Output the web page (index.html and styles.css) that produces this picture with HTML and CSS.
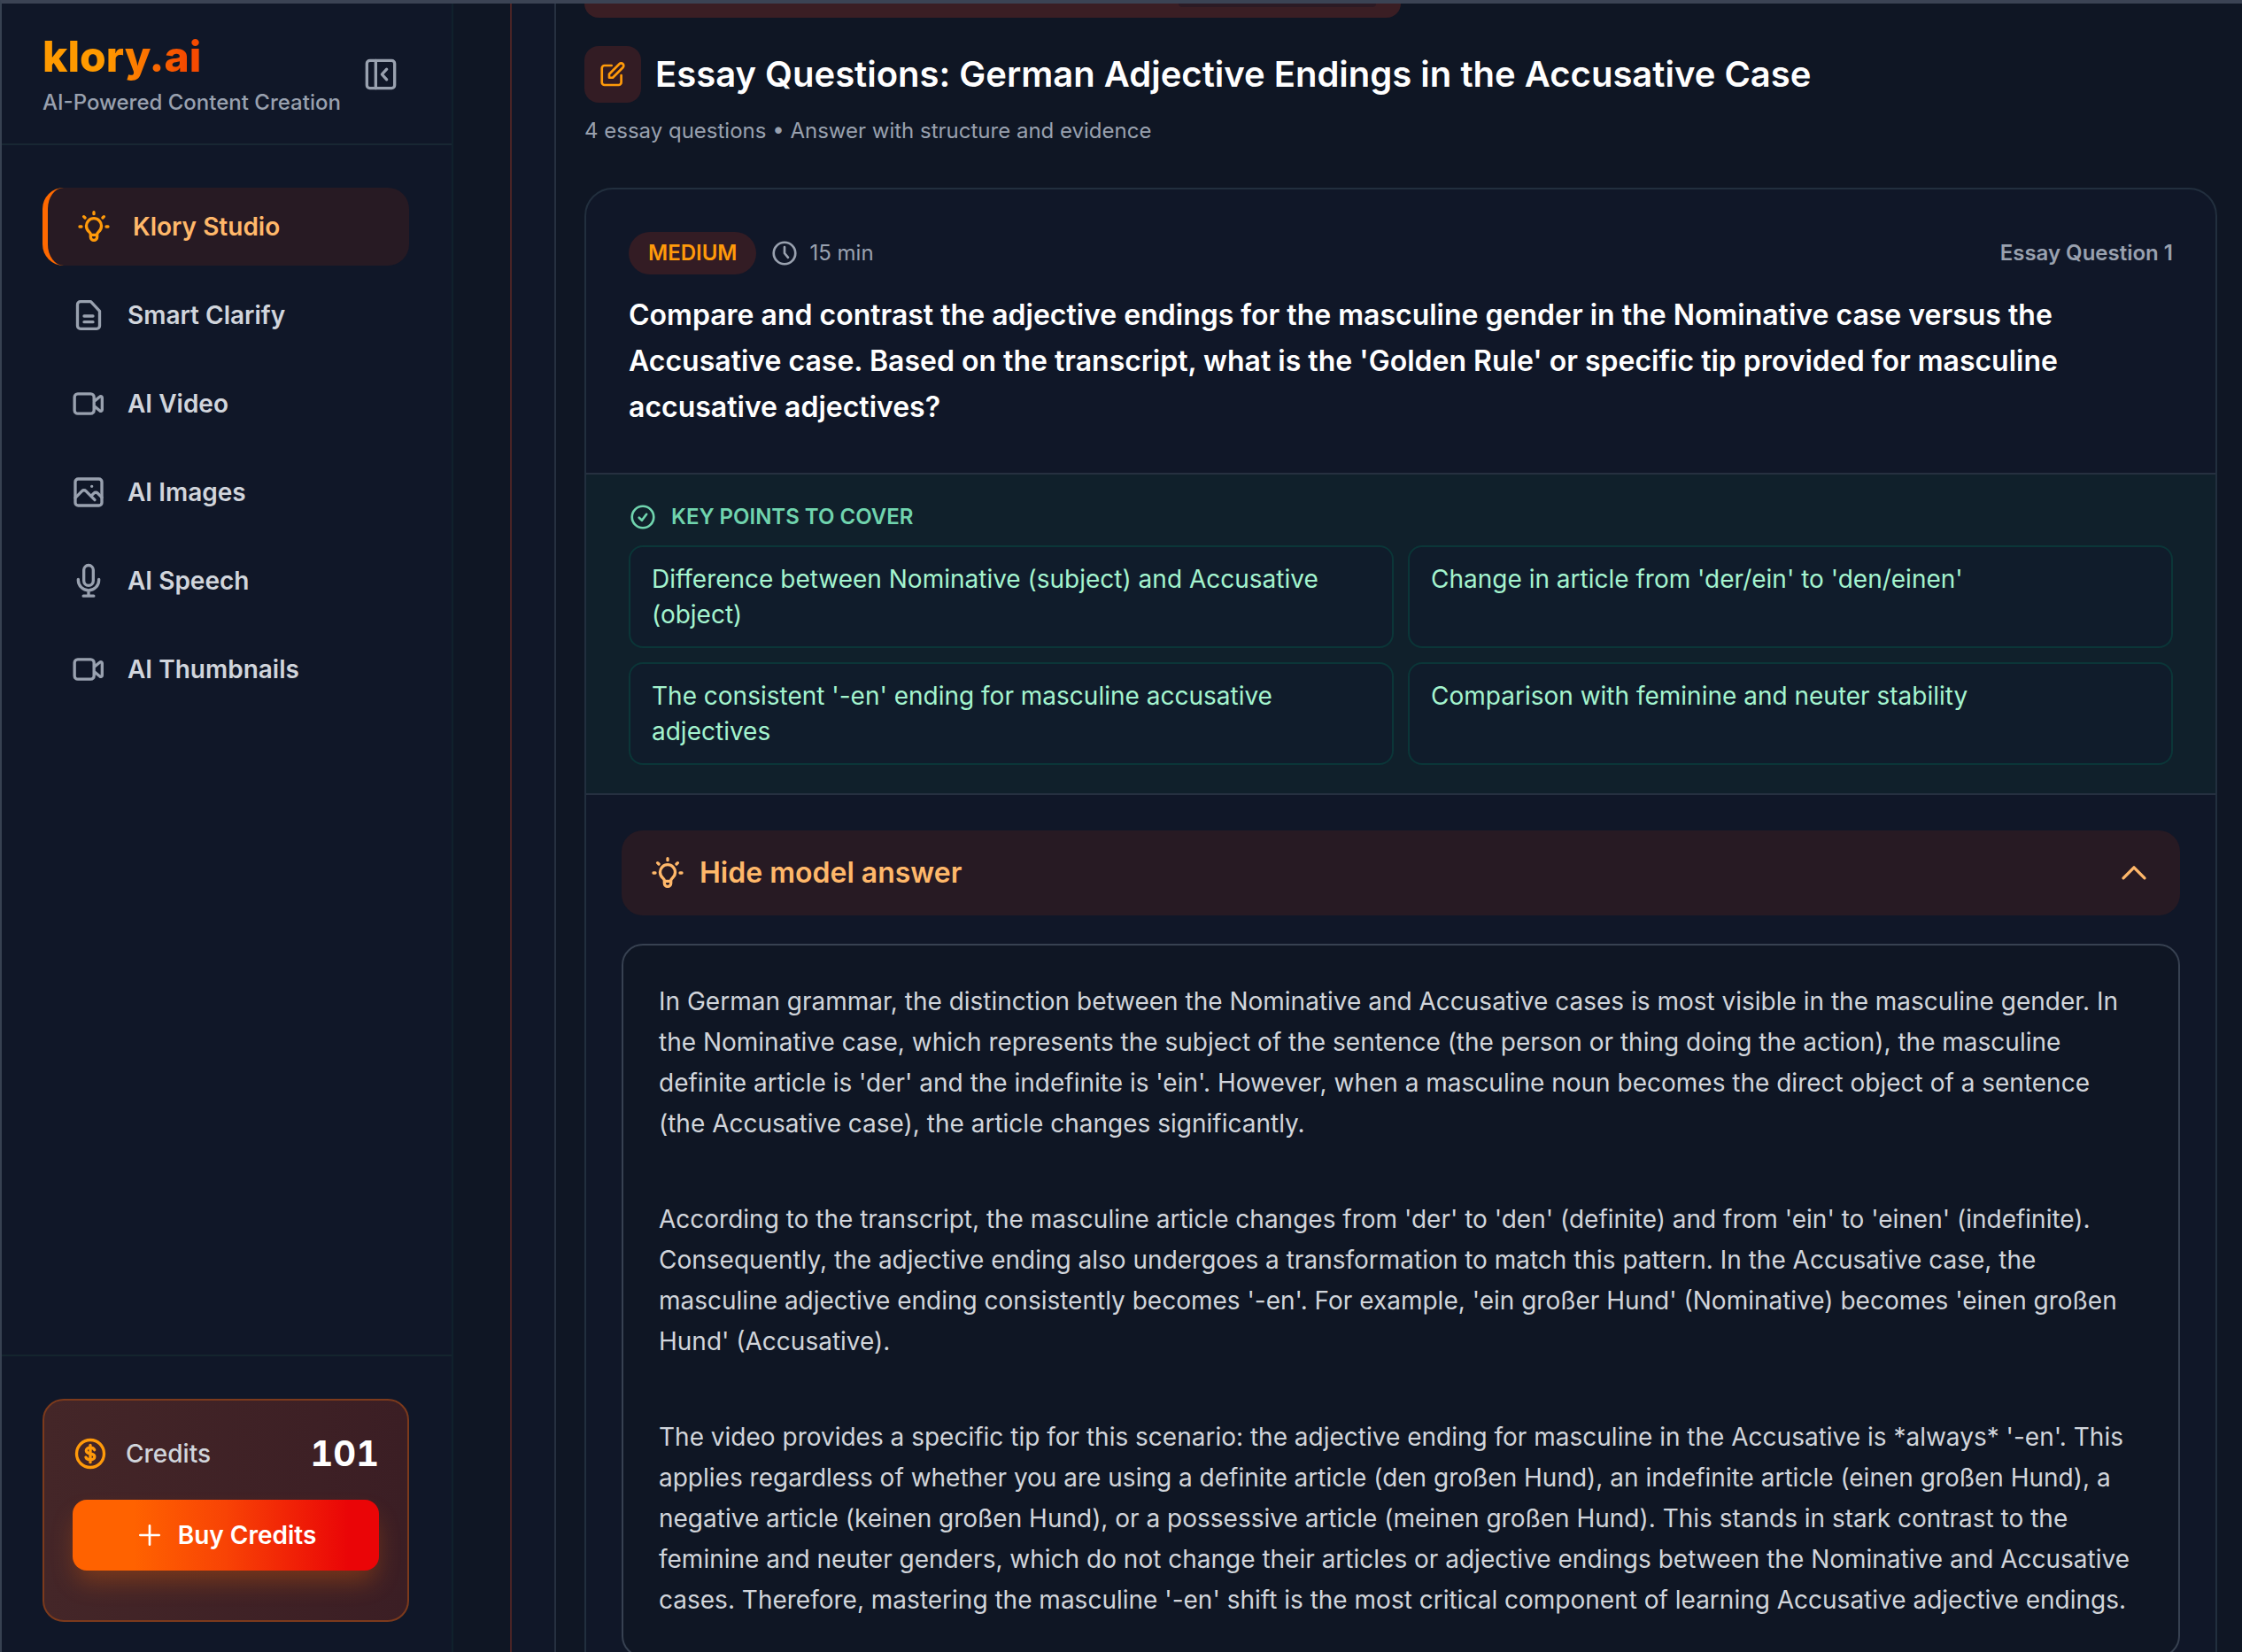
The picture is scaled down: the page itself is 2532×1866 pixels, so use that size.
FILE: index.html
```html
<!DOCTYPE html>
<html lang="en">
  <head>
    <meta charset="UTF-8" />
    <meta name="viewport" content="width=device-width, initial-scale=1.0" />
    <title>klory.ai - Essay Questions</title>
    <link rel="stylesheet" href="styles.css">
  </head>
  <body>
    <!-- shared icons -->
    <svg class="icon-defs" aria-hidden="true">
      <symbol id="icon-bulb" viewBox="0 0 24 24">
        <path d="M12 2.200v1.200M5.200 5.200l.8.8M18.800 5.200 18 6M2.400 12h1.200M20.400 12h1.200M9.800 19v-1.700c0-.8-.5-1.300-1.100-1.900a5.100 5.100 0 1 1 6.600 0c-.6.6-1.100 1.100-1.100 1.900V19a2.200 2.200 0 0 1-4.400 0zM9.800 17.600h4.400" />
      </symbol>
      <symbol id="icon-video" viewBox="0 0 24 24">
        <path d="m15.700 10.500 4-3.300a.9.900 0 0 1 1.500.7v8.200a.9.900 0 0 1-1.500.7l-4-3.300M4.700 18.700h8.800a2.200 2.200 0 0 0 2.200-2.200v-9a2.200 2.200 0 0 0-2.200-2.200H4.700a2.200 2.200 0 0 0-2.200 2.200v9a2.200 2.200 0 0 0 2.200 2.200z" />
      </symbol>
    </svg>

    <div class="app">
      <aside class="sidebar">
        <div class="sidebar-header">
          <div>
            <div class="logo">klory.ai</div>
            <p class="tagline">AI-Powered Content Creation</p>
          </div>
          <button type="button" class="collapse-btn" aria-label="Collapse sidebar">
            <svg class="icon" viewBox="0 0 24 24">
              <rect x="2.600" y="2.600" width="18.800" height="18.800" rx="2" />
              <path d="M8.600 2.600v18.800M16 8.500 12.800 12l3.200 3.500" />
            </svg>
          </button>
        </div>

        <nav class="nav">
          <a href="#" class="nav-item active">
            <svg class="icon"><use href="#icon-bulb" /></svg>
            Klory Studio
          </a>
          <a href="#" class="nav-item">
            <svg class="icon" viewBox="0 0 24 24">
              <path d="M13.500 2.800h-7a2 2 0 0 0-2 2v14.400a2 2 0 0 0 2 2h11a2 2 0 0 0 2-2V9.200zM9 12.600h6M9 16.600h6" />
            </svg>
            Smart Clarify
          </a>
          <a href="#" class="nav-item">
            <svg class="icon"><use href="#icon-video" /></svg>
            AI Video
          </a>
          <a href="#" class="nav-item">
            <svg class="icon" viewBox="0 0 24 24">
              <rect x="3" y="3" width="18" height="18" rx="2" />
              <path d="m3 15.800 4.600-4.600a1.800 1.800 0 0 1 2.600 0l6 6M14 14.300l1.600-1.600a1.800 1.800 0 0 1 2.600 0l2.800 2.800M14.200 8h.01" />
            </svg>
            AI Images
          </a>
          <a href="#" class="nav-item">
            <svg class="icon" viewBox="0 0 24 24">
              <path d="M12 18.500a7 7 0 0 0 7-7V11M12 18.500a7 7 0 0 1-7-7V11M12 18.500v3.800M8.500 22.300h7M12 15.200a3.200 3.200 0 0 1-3.200-3.200V4.700a3.200 3.200 0 0 1 6.400 0V12a3.200 3.200 0 0 1-3.200 3.200z" />
            </svg>
            AI Speech
          </a>
          <a href="#" class="nav-item">
            <svg class="icon"><use href="#icon-video" /></svg>
            AI Thumbnails
          </a>
        </nav>

        <div class="sidebar-footer">
          <div class="credits-card">
            <div class="credits-row">
              <svg class="icon" viewBox="0 0 24 24">
                <circle cx="12" cy="12" r="9.300" />
                <path d="M12 6.200v11.600M14.800 9.400c-.4-.9-1.500-1.500-2.800-1.500-1.600 0-2.800.8-2.800 2s1 1.800 2.800 2.100 2.900.9 2.900 2.100-1.300 2-2.900 2c-1.400 0-2.600-.6-3-1.600" />
              </svg>
              <span class="credits-label">Credits</span>
              <strong class="credits-count">101</strong>
            </div>
            <button type="button" class="buy-btn">
              <svg class="icon icon-sm" viewBox="0 0 24 24">
                <path d="M12 4v16M4 12h16" />
              </svg>
              Buy Credits
            </button>
          </div>
        </div>
      </aside>

      <main class="workspace">
        <div class="panel">
          <div class="tab-strip"><span class="tab"></span></div>

          <header class="page-header">
            <div class="title-row">
              <span class="title-icon">
                <svg class="icon icon-sm" viewBox="0 0 24 24">
                  <path d="M11 4.500H5a2.200 2.200 0 0 0-2.200 2.200v12.100A2.200 2.200 0 0 0 5 21h12a2.200 2.200 0 0 0 2.200-2.200v-6M17.600 3.200a2.100 2.100 0 0 1 3 3L12 14.800H9v-3z" />
                </svg>
              </span>
              <h1>Essay Questions: German Adjective Endings in the Accusative Case</h1>
            </div>
            <p class="subtitle">4 essay questions • Answer with structure and evidence</p>
          </header>

          <article class="question-card">
            <section class="question">
              <div class="question-meta">
                <span class="badge">MEDIUM</span>
                <span class="duration">
                  <svg class="icon icon-sm" viewBox="0 0 24 24">
                    <circle cx="12" cy="12" r="9.200" />
                    <path d="M12 6.800V12l3 3.600" />
                  </svg>
                  15 min
                </span>
                <span class="question-number">Essay Question 1</span>
              </div>
              <h2>Compare and contrast the adjective endings for the masculine gender in the Nominative case versus the Accusative case. Based on the transcript, what is the 'Golden Rule' or specific tip provided for masculine accusative adjectives?</h2>
            </section>

            <section class="key-points">
              <h3>
                <svg class="icon icon-sm" viewBox="0 0 24 24">
                  <circle cx="12" cy="12" r="9.200" />
                  <path d="m8.800 12.500 2.400 2.300 3.900-5.200" />
                </svg>
                KEY POINTS TO COVER
              </h3>
              <ul>
                <li>Difference between Nominative (subject) and Accusative (object)</li>
                <li>Change in article from 'der/ein' to 'den/einen'</li>
                <li>The consistent '-en' ending for masculine accusative adjectives</li>
                <li>Comparison with feminine and neuter stability</li>
              </ul>
            </section>

            <section class="answer">
              <button type="button" class="answer-toggle" aria-expanded="true">
                <svg class="icon"><use href="#icon-bulb" /></svg>
                Hide model answer
                <svg class="icon chevron" viewBox="0 0 24 24">
                  <path d="m4.800 15.500 7.200-7.200 7.200 7.200" />
                </svg>
              </button>
              <div class="answer-text">
                <p>In German grammar, the distinction between the Nominative and Accusative cases is most visible in the masculine gender. In the Nominative case, which represents the subject of the sentence (the person or thing doing the action), the masculine definite article is 'der' and the indefinite is 'ein'. However, when a masculine noun becomes the direct object of a sentence (the Accusative case), the article changes significantly.</p>
                <p>According to the transcript, the masculine article changes from 'der' to 'den' (definite) and from 'ein' to 'einen' (indefinite). Consequently, the adjective ending also undergoes a transformation to match this pattern. In the Accusative case, the masculine adjective ending consistently becomes '-en'. For example, 'ein großer Hund' (Nominative) becomes 'einen großen Hund' (Accusative).</p>
                <p>The video provides a specific tip for this scenario: the adjective ending for masculine in the Accusative is *always* '-en'. This applies regardless of whether you are using a definite article (den großen Hund), an indefinite article (einen großen Hund), a negative article (keinen großen Hund), or a possessive article (meinen großen Hund). This stands in stark contrast to the feminine and neuter genders, which do not change their articles or adjective endings between the Nominative and Accusative cases. Therefore, mastering the masculine '-en' shift is the most critical component of learning Accusative adjective endings.</p>
              </div>
            </section>
          </article>
        </div>
      </main>
    </div>
  </body>
</html>
```

FILE: styles.css
```css
* {
  box-sizing: border-box;
  margin: 0;
  padding: 0;
}
body {
  font-family: Inter, "Liberation Sans", sans-serif;
  font-size: 28px;
  line-height: 40px;
  background-color: #0f1624;
  color: #d1d5db;
}
button {
  font: inherit;
  border: none;
  cursor: pointer;
}
.icon-defs {
  display: none;
}
.icon {
  width: 40px;
  height: 40px;
  flex-shrink: 0;
  fill: none;
  stroke: currentColor;
  stroke-width: 2;
  stroke-linecap: round;
  stroke-linejoin: round;
}
.icon-sm {
  width: 32px;
  height: 32px;
}
.app {
  display: flex;
  height: 100vh;
  overflow: hidden;
  border-top: 4px solid #3b4354;
  border-left: 2px solid #374151;
}

/* sidebar */
.sidebar {
  width: 510px;
  flex-shrink: 0;
  display: flex;
  flex-direction: column;
  background-color: #101728;
  border-right: 2px solid #10212c;
}
.sidebar-header {
  display: flex;
  align-items: center;
  justify-content: space-between;
  padding: 28px 60px 26px 46px;
  border-bottom: 2px solid #182733;
}
.logo {
  width: fit-content;
  font-size: 48px;
  font-weight: 800;
  line-height: 64px;
  background-image: linear-gradient(90deg, #ff9a00 40%, #f54a00 90%);
  background-clip: text;
  color: transparent;
}
.tagline {
  font-size: 24px;
  font-weight: 500;
  color: #99a1af;
}
.collapse-btn {
  display: flex;
  background: none;
  color: #99a1af;
}
.nav {
  flex: 1;
  display: flex;
  flex-direction: column;
  gap: 12px;
  padding: 48px 48px 48px 46px;
}
.nav-item {
  display: flex;
  align-items: center;
  gap: 24px;
  height: 88px;
  padding: 0 32px;
  border-radius: 24px;
  font-weight: 600;
  color: #d1d5dc;
  text-decoration: none;
}
.nav-item .icon {
  color: #99a1af;
}
.nav-item.active {
  border-left: 6px solid #ff6900;
  background-color: #271a23;
  color: #ffb86a;
}
.nav-item.active .icon {
  color: #ff9a0a;
}
.sidebar-footer {
  padding: 48px 48px 34px 46px;
  border-top: 2px solid #14252e;
}
.credits-card {
  padding: 32px 32px 56px;
  border: 2px solid #7c3a1c;
  border-radius: 24px;
  background-image: linear-gradient(90deg, #442628, #3b1e24);
}
.credits-row {
  display: flex;
  align-items: center;
  gap: 20px;
  margin-bottom: 24px;
}
.credits-row .icon {
  color: #ff9a0a;
}
.credits-label {
  font-weight: 500;
}
.credits-count {
  margin-left: auto;
  font-size: 40px;
  line-height: 56px;
  font-variant-numeric: tabular-nums;
  color: #fff;
}
.buy-btn {
  display: flex;
  align-items: center;
  justify-content: center;
  gap: 16px;
  width: 100%;
  height: 80px;
  border-radius: 16px;
  background-image: linear-gradient(90deg, #ff6200 20%, #f84305 50%, #ea0507 90%);
  box-shadow: 0 16px 28px -4px rgba(255, 105, 0, 0.3);
  font-weight: 600;
  color: #fff;
}

/* workspace */
.workspace {
  flex: 1;
  min-width: 0;
  margin-left: 64px;
  padding-left: 48px;
  border-left: 2px solid #4a2426;
  background-color: #101728;
}
.panel {
  height: 100%;
  padding: 0 28px 0 32px;
  border-left: 2px solid #263040;
  background-color: #0f1624;
}
.tab-strip {
  display: flex;
  justify-content: flex-end;
  width: 50%;
  height: 16px;
  padding-right: 28px;
  border-radius: 0 0 24px 24px;
  background-color: #3a1e24;
}
.tab {
  width: 25%;
  height: 4px;
  border-radius: 0 0 8px 8px;
  background-color: #2b1a24;
}
.page-header {
  padding: 32px 0 48px;
}
.title-row {
  display: flex;
  align-items: center;
  gap: 16px;
}
.title-icon {
  display: flex;
  padding: 16px;
  border-radius: 16px;
  background-color: #331c24;
  color: #ff9a0a;
}
h1 {
  font-size: 40px;
  font-weight: 600;
  line-height: 56px;
  color: #fff;
}
.subtitle {
  margin-top: 16px;
  font-size: 24px;
  line-height: 32px;
  color: #99a1af;
}
.question-card {
  border: 2px solid #222f3e;
  border-radius: 32px;
  background-color: #101728;
}
.question {
  padding: 48px;
}
.question-meta {
  display: flex;
  align-items: center;
  gap: 16px;
  margin-bottom: 20px;
  font-size: 24px;
  color: #99a1af;
}
.badge {
  padding: 4px 22px;
  border-radius: 24px;
  background-color: #331c24;
  font-weight: 600;
  color: #ff9a0a;
}
.duration {
  display: flex;
  align-items: center;
  gap: 12px;
}
.question-number {
  margin-left: auto;
  font-weight: 600;
}
h2 {
  font-size: 32px;
  font-weight: 600;
  line-height: 52px;
  color: #fff;
}
.key-points {
  padding: 32px 48px;
  border-top: 2px solid #263040;
  border-bottom: 2px solid #263040;
  background-color: #10202b;
}
.key-points h3 {
  display: flex;
  align-items: center;
  gap: 16px;
  margin-bottom: 16px;
  font-size: 24px;
  font-weight: 600;
  line-height: 32px;
  color: #70d4ae;
}
.key-points ul {
  display: grid;
  grid-template-columns: 1fr 1fr;
  gap: 16px;
  list-style: none;
}
.key-points li {
  padding: 16px 24px;
  border: 2px solid #0b3638;
  border-radius: 16px;
  background-color: #101c2b;
  color: #a4f4cf;
}
.answer {
  padding: 40px;
}
.answer-toggle {
  display: flex;
  align-items: center;
  gap: 16px;
  width: 100%;
  height: 96px;
  padding: 0 32px;
  margin-bottom: 32px;
  border-radius: 24px;
  background-color: #271a23;
  font-size: 32px;
  font-weight: 600;
  color: #ffb86a;
}
.chevron {
  margin-left: auto;
}
.answer-text {
  padding: 40px;
  border: 2px solid #374151;
  border-radius: 24px;
  background-color: #0f1624;
  line-height: 46px;
}
.answer-text p + p {
  margin-top: 62px;
}
```
